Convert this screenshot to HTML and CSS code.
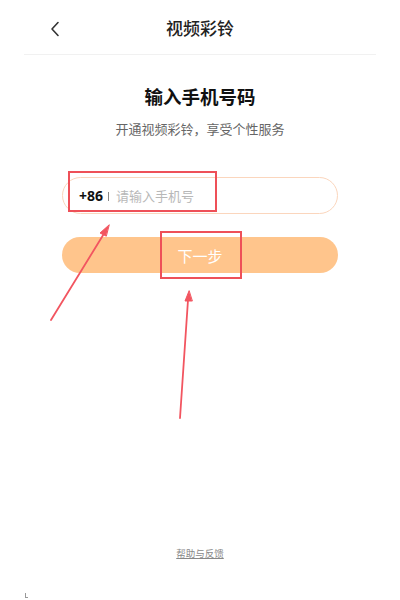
FILE: index.html
```html
<!DOCTYPE html>
<html lang="zh-CN">
<head>
<meta charset="utf-8">
<title>视频彩铃</title>
<link rel="stylesheet" href="styles.css">
</head>
<body>
<div class="page">
  <header class="header">
    <span class="back">
      <svg width="12" height="16" viewBox="0 0 12 16"><path d="M9 1.5 L3 8 L9 14.5" fill="none" stroke="#333" stroke-width="1.6" stroke-linecap="round" stroke-linejoin="round"/></svg>
    </span>
    <span class="title">视频彩铃</span>
  </header>
  <main class="main">
    <h1 class="heading">输入手机号码</h1>
    <p class="sub">开通视频彩铃，享受个性服务</p>
    <div class="input">
      <span class="code">+86</span>
      <span class="sep"></span>
      <span class="ph">请输入手机号</span>
    </div>
    <div class="btn">下一步</div>
  </main>
  <footer class="footer"><span class="help">帮助与反馈</span></footer>
  <div class="mark"></div>
  <div class="box box1"></div>
  <div class="box box2"></div>
  <svg class="arrows" width="400" height="600" viewBox="0 0 400 600">
    <g stroke="#f25560" stroke-width="1.8" fill="#f25560" stroke-linecap="round">
      <line x1="51" y1="320" x2="105" y2="232"/>
      <polygon points="109,225 100,233 106,236" stroke-width="1"/>
      <line x1="180" y1="418" x2="188" y2="300"/>
      <polygon points="189,291 185,301 192,301" stroke-width="1"/>
    </g>
  </svg>
</div>
</body>
</html>
```

FILE: styles.css
```css
* { box-sizing: border-box; }
html, body { margin: 0; padding: 0; background: #fff; }
body { font-family: "Noto Sans CJK SC", "Noto Sans", sans-serif; color: #222; }
.page { position: relative; width: 400px; height: 600px; display: flex; flex-direction: column; overflow: hidden; }
.header { position: relative; height: 55px; margin: 0 24px; border-bottom: 1px solid #f1f1f1; display: flex; align-items: center; justify-content: center; }
.back { position: absolute; left: 25px; top: 21px; display: flex; }
.title { font-size: 17px; font-weight: 500; color: #222; margin-top: 1px; }
.main { display: flex; flex-direction: column; align-items: center; }
.heading { margin: 28px 0 0; font-size: 18.5px; font-weight: 700; line-height: 26px; color: #111; }
.sub { margin: 10px 0 0; font-size: 13px; line-height: 20px; color: #666; }
.input { margin-top: 38px; width: 276px; height: 37px; border: 1px solid #fbd6bd; border-radius: 19px; display: flex; align-items: center; padding-left: 16px; }
.code { font-size: 14px; font-weight: 700; color: #111; font-family: "Noto Sans", sans-serif; }
.sep { width: 1px; height: 9px; background: #888; margin: 1px 7px 0 5px; }
.ph { font-size: 13px; color: #b8b8b8; }
.btn { margin-top: 23px; width: 276px; height: 36px; border-radius: 18px; background: #ffc58c; color: #fff; font-size: 15px; display: flex; align-items: center; justify-content: center; }
.footer { margin-top: auto; height: 54px; display: flex; justify-content: center; }
.help { font-size: 9.5px; color: #888; text-decoration: underline; line-height: 14px; }
.mark { position: absolute; left: 25px; top: 593px; width: 3px; height: 5px; border-left: 1px solid #999; border-bottom: 1px solid #999; }
.box { position: absolute; border: 2px solid #ee5058; }
.box1 { left: 68px; top: 171px; width: 149px; height: 41px; }
.box2 { left: 160px; top: 231px; width: 82px; height: 48px; }
.arrows { position: absolute; left: 0; top: 0; pointer-events: none; }
```
